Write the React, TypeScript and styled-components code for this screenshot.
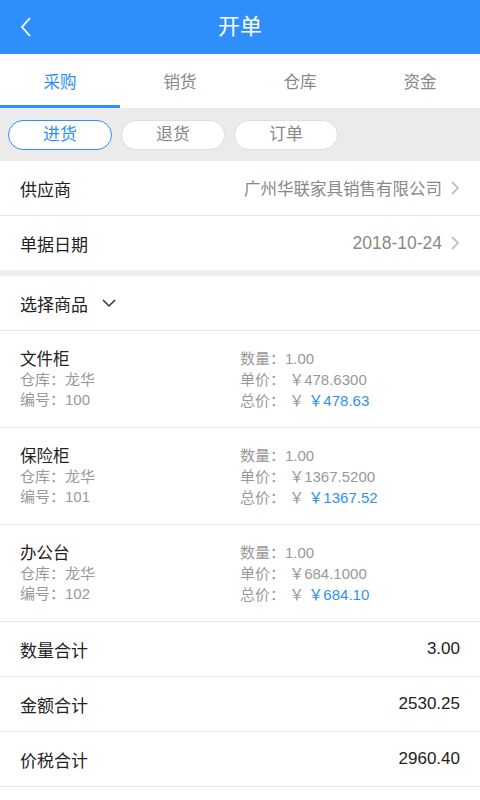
import React, { useState } from 'react';
import styled, { createGlobalStyle } from 'styled-components';

const GlobalStyle = createGlobalStyle`
  * { box-sizing: border-box; }
  body {
    margin: 0;
    background: #fff;
    font-family: "Liberation Sans", "Noto Sans CJK SC", sans-serif;
    color: #222;
  }
`;

const Page = styled.div`
  width: 480px;
  min-height: 800px;
  background: #fff;
`;

const Header = styled.header`
  height: 54px;
  background: #2f8ffa;
  display: flex;
  align-items: center;
  justify-content: center;
  position: relative;
`;

const BackButton = styled.button`
  position: absolute;
  left: 12px;
  top: 13px;
  width: 28px;
  height: 28px;
  border: none;
  background: none;
  padding: 0;
  display: flex;
  align-items: center;
  justify-content: center;
`;

const Title = styled.h1`
  margin: 0;
  font-size: 22px;
  font-weight: 400;
  color: #fff;
  line-height: 1;
`;

const TabBar = styled.nav`
  height: 54px;
  display: grid;
  grid-template-columns: repeat(4, 1fr);
  background: #fff;
`;

const Tab = styled.button<{ $active?: boolean }>`
  border: none;
  background: none;
  font-family: inherit;
  font-size: 16.5px;
  color: ${({ $active }) => ($active ? '#2f8ffa' : '#888')};
  border-bottom: 3px solid ${({ $active }) => ($active ? '#2f8ffa' : 'transparent')};
  padding: 3px 0 0;
`;

const SegmentBar = styled.div`
  height: 53px;
  background: #ebebeb;
  display: flex;
  align-items: center;
  gap: 9px;
  padding: 0 8px;
`;

const Pill = styled.button<{ $active?: boolean }>`
  width: 104px;
  height: 30px;
  border-radius: 15px;
  background: #fff;
  border: 1px solid ${({ $active }) => ($active ? '#2f8ffa' : '#dedede')};
  color: ${({ $active }) => ($active ? '#2f8ffa' : '#888')};
  font-family: inherit;
  font-size: 17px;
  line-height: 1;
  padding: 0;
`;

const Row = styled.div<{ $gap?: boolean }>`
  display: flex;
  align-items: center;
  justify-content: space-between;
  padding: 0 20px;
  border-bottom: ${({ $gap }) => ($gap ? '6px solid #f0f0f0' : '1px solid #e6e6e6')};
  height: ${({ $gap }) => ($gap ? '60px' : '55px')};
`;

const Label = styled.span`
  font-size: 17px;
  color: #222;
  display: flex;
  align-items: center;
  gap: 14px;
`;

const Value = styled.span<{ $muted?: boolean; $size?: number }>`
  font-size: ${({ $size }) => $size ?? 16.5}px;
  color: ${({ $muted }) => ($muted ? '#888' : '#222')};
  display: flex;
  align-items: center;
  gap: 8px;
`;

const ItemRow = styled.div`
  height: 97px;
  display: grid;
  grid-template-columns: 220px 1fr;
  padding: 17px 20px 0;
  border-bottom: 1px solid #e6e6e6;
`;

const ItemCol = styled.div`
  display: flex;
  flex-direction: column;
`;

const ItemName = styled.div`
  font-size: 16.5px;
  color: #222;
  line-height: 22px;
`;

const ItemMeta = styled.div`
  font-size: 15px;
  color: #999;
  line-height: 20px;
`;

const PriceLine = styled.div`
  font-size: 15px;
  color: #999;
  line-height: 21px;
`;

const Highlight = styled.span`
  color: #2f8ffa;
`;

const Chevron = () => (
  <svg width="10" height="16" viewBox="0 0 10 16">
    <polyline points="2,2 8,8 2,14" fill="none" stroke="#c4c4c4" strokeWidth="2" />
  </svg>
);

const items = [
  { name: '文件柜', code: '100', unit: '478.6300', total: '478.63' },
  { name: '保险柜', code: '101', unit: '1367.5200', total: '1367.52' },
  { name: '办公台', code: '102', unit: '684.1000', total: '684.10' },
];

const App: React.FC = () => {
  const [tab, setTab] = useState(0);
  const [seg, setSeg] = useState(0);

  return (
    <Page>
      <GlobalStyle />
      <Header>
        <BackButton>
          <svg width="14" height="22" viewBox="0 0 14 22">
            <polyline points="11,2 3,11 11,20" fill="none" stroke="#fff" strokeWidth="1.8" />
          </svg>
        </BackButton>
        <Title>开单</Title>
      </Header>

      <TabBar>
        {['采购', '销货', '仓库', '资金'].map((t, i) => (
          <Tab key={t} $active={tab === i} onClick={() => setTab(i)}>
            {t}
          </Tab>
        ))}
      </TabBar>

      <SegmentBar>
        {['进货', '退货', '订单'].map((s, i) => (
          <Pill key={s} $active={seg === i} onClick={() => setSeg(i)}>
            {s}
          </Pill>
        ))}
      </SegmentBar>

      <Row>
        <Label>供应商</Label>
        <Value $muted>
          广州华联家具销售有限公司
          <Chevron />
        </Value>
      </Row>
      <Row $gap>
        <Label>单据日期</Label>
        <Value $muted $size={17.5}>
          2018-10-24
          <Chevron />
        </Value>
      </Row>
      <Row>
        <Label>
          选择商品
          <svg width="14" height="9" viewBox="0 0 14 9">
            <polyline points="1,1 7,7 13,1" fill="none" stroke="#333" strokeWidth="1.5" />
          </svg>
        </Label>
      </Row>

      {items.map((it) => (
        <ItemRow key={it.code}>
          <ItemCol>
            <ItemName>{it.name}</ItemName>
            <ItemMeta>仓库：龙华</ItemMeta>
            <ItemMeta>编号：{it.code}</ItemMeta>
          </ItemCol>
          <ItemCol>
            <PriceLine>数量：1.00</PriceLine>
            <PriceLine>单价： ￥{it.unit}</PriceLine>
            <PriceLine>
              总价： ￥ <Highlight>￥{it.total}</Highlight>
            </PriceLine>
          </ItemCol>
        </ItemRow>
      ))}

      <Row>
        <Label>数量合计</Label>
        <Value $size={17}>3.00</Value>
      </Row>
      <Row>
        <Label>金额合计</Label>
        <Value $size={17}>2530.25</Value>
      </Row>
      <Row>
        <Label>价税合计</Label>
        <Value $size={17}>2960.40</Value>
      </Row>
    </Page>
  );
};

export default App;
